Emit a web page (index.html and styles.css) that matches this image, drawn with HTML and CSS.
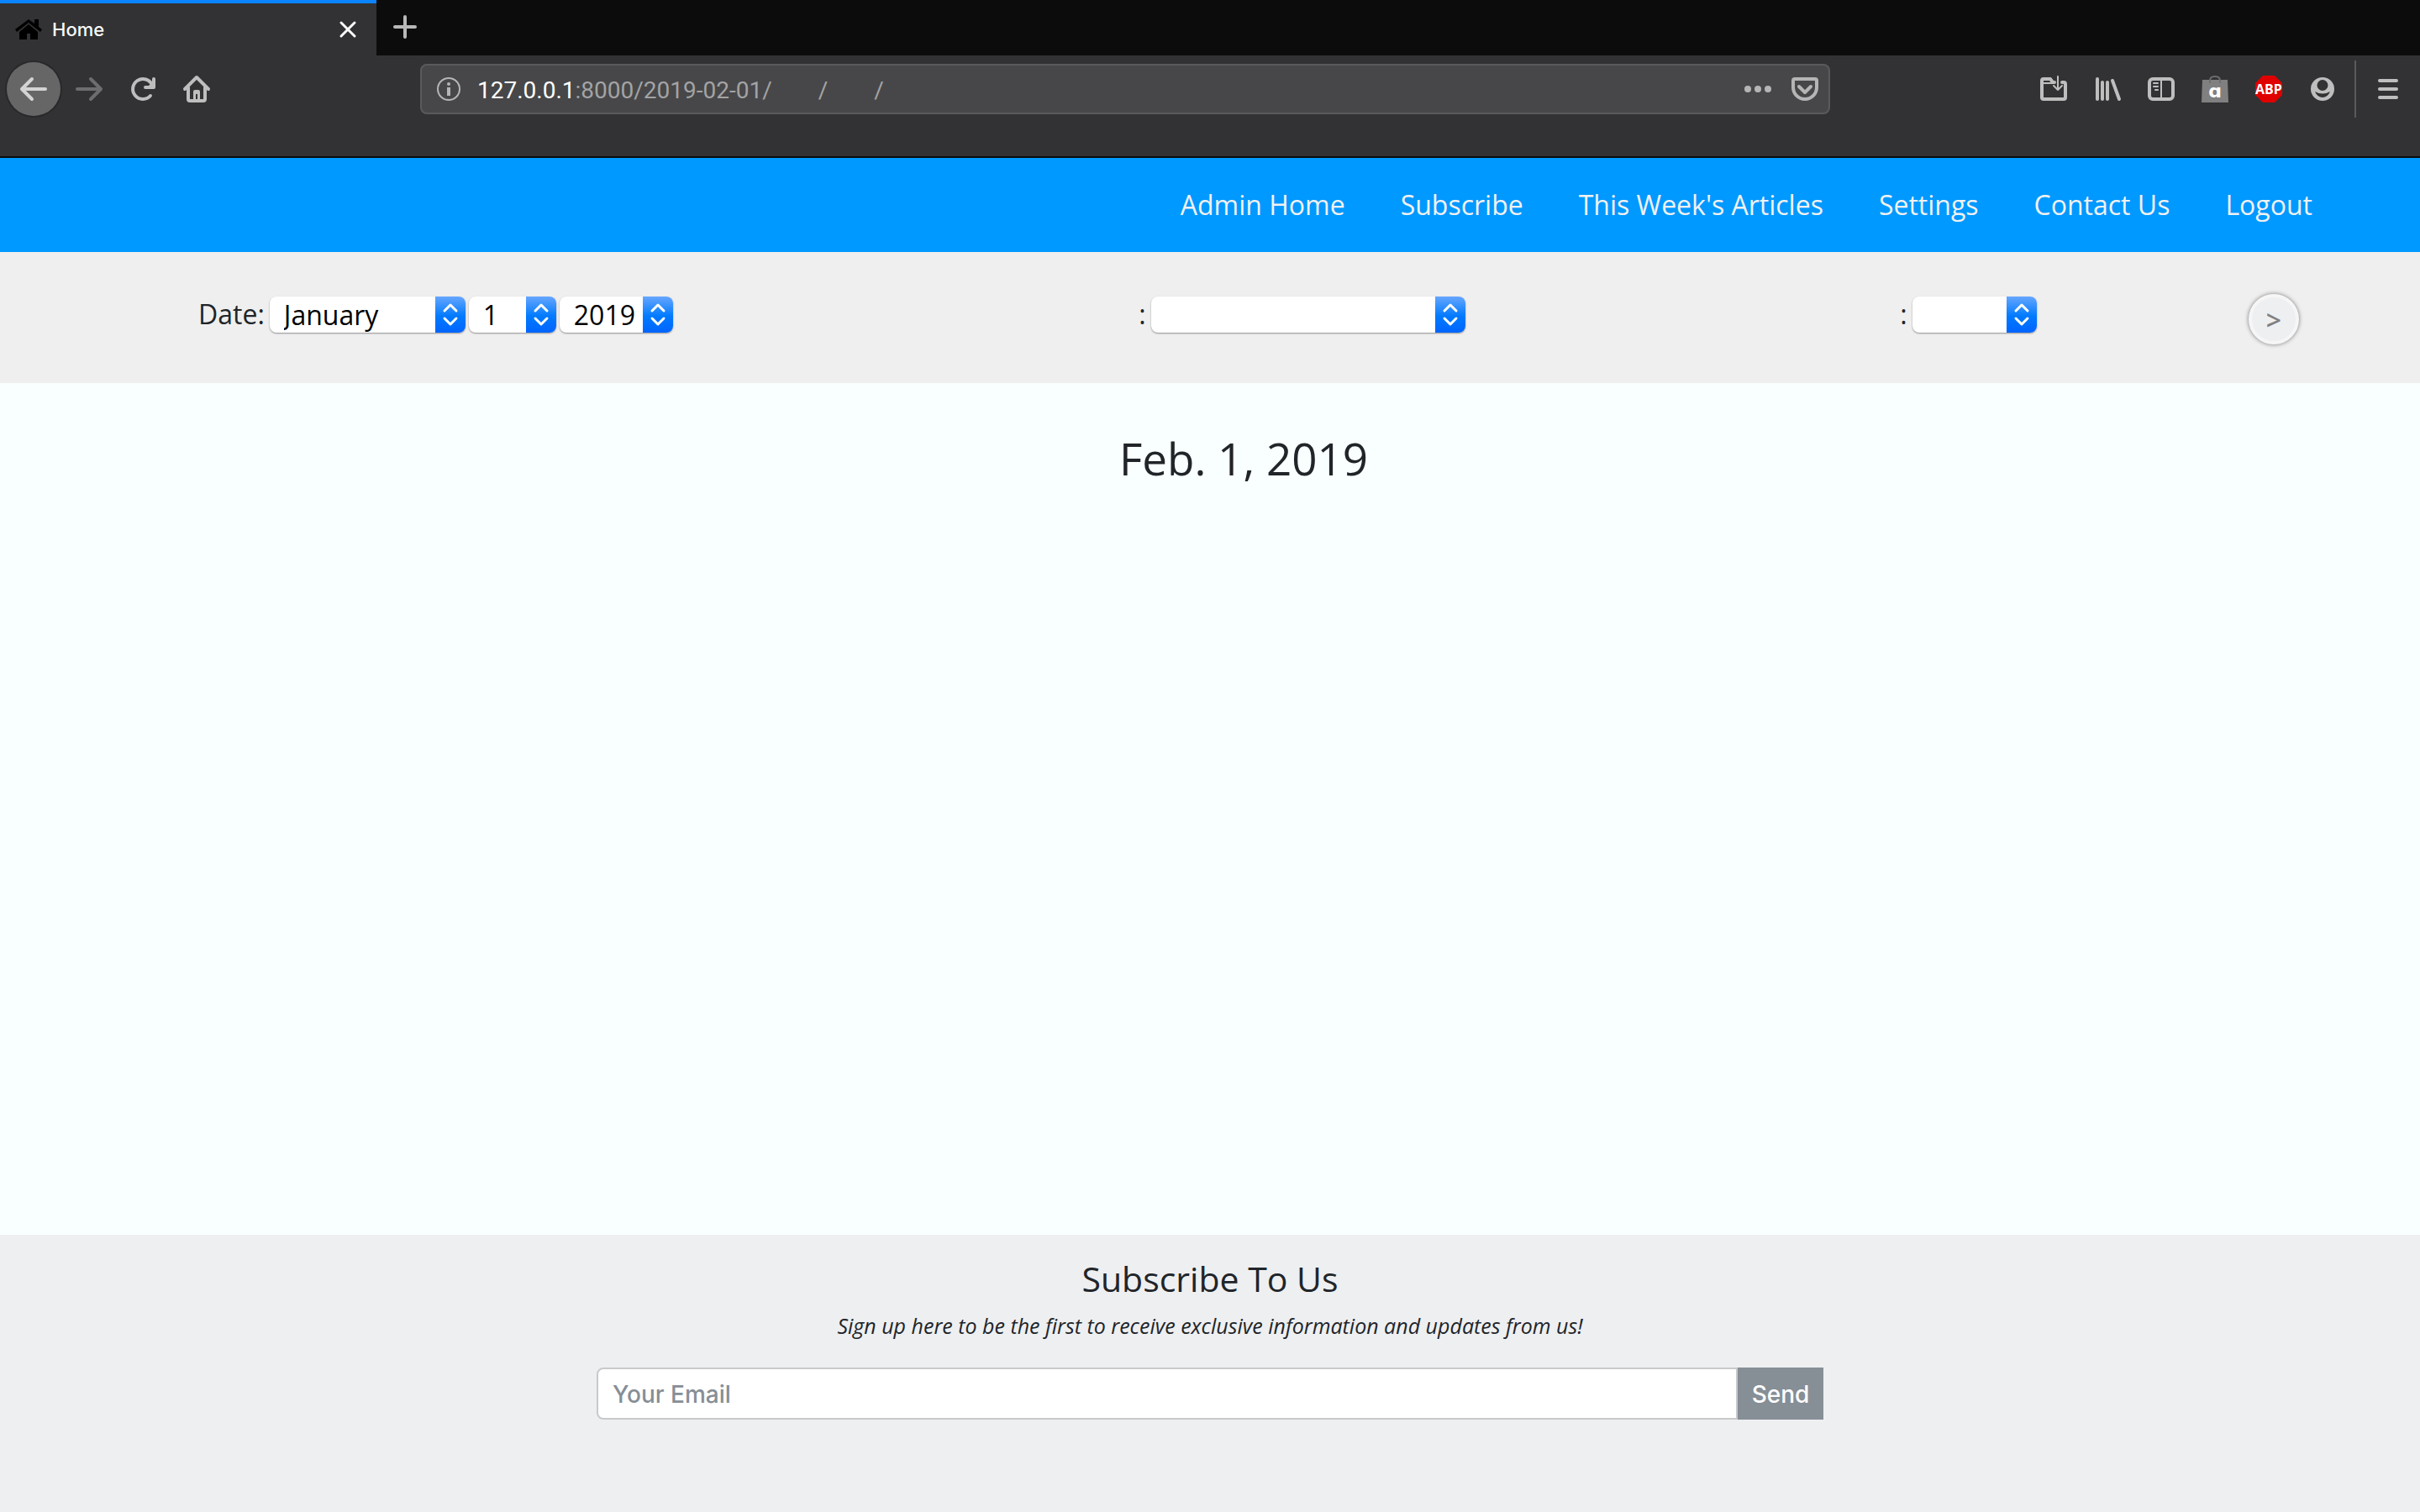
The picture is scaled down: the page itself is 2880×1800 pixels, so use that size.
FILE: index.html
```html
<!DOCTYPE html>
<html lang="en">
<head>
<meta charset="utf-8">
<title>Home</title>
<link rel="stylesheet" href="styles.css">
</head>
<body>
<div class="tabs">
  <div class="tab">
    <svg class="tab-icon" viewBox="0 0 32 24" width="32" height="24"><path d="M16 0 0 12l2 3L16 4l14 11 2-3-4-3V0h-5v5z"/><path d="M16 6 5 15v9h9v-7h4v7h9v-9z"/></svg>
    <span class="tab-title">Home</span>
    <button class="tab-close" aria-label="Close tab"><svg viewBox="0 0 20 20" width="20" height="20"><path d="m2 2 16 16M18 2 2 18"/></svg></button>
  </div>
  <button class="tab-new" aria-label="New tab"><svg viewBox="0 0 28 28" width="28" height="28"><path d="M14 2v24M2 14h24"/></svg></button>
</div>
<div class="toolbar">
  <div class="tools-left">
    <button class="back" aria-label="Back"><svg viewBox="0 0 32 32" width="32" height="32"><path d="M30 16H3M14 4 2 16l12 12"/></svg></button>
    <button class="tool dim" aria-label="Forward"><svg viewBox="0 0 32 32" width="32" height="32"><path d="M2 16h27M18 4l12 12-12 12"/></svg></button>
    <button class="tool" aria-label="Reload"><svg viewBox="0 0 32 32" width="32" height="32"><path d="M25 24a12 12 0 1 1 2-13"/><path d="M29 4v10H19"/><path d="m29 6-8 8h8z" class="fill"/></svg></button>
    <button class="tool" aria-label="Home page"><svg viewBox="0 0 32 32" width="32" height="32"><path d="M2 16 16 2l14 14M6 14v14q0 2 2 2h16q2 0 2-2V14"/><path d="M12 30V19q0-2 2-2h4q2 0 2 2v11h-3v-8h-2v8z" class="fill"/></svg></button>
  </div>
  <div class="address">
    <svg class="info" viewBox="0 0 28 28" width="28" height="28"><circle cx="14" cy="14" r="13"/><path class="fill" d="M12 12h4v10h-4z"/><circle class="fill" cx="14" cy="8" r="2"/></svg>
    <div class="url"><b>127.0.0.1</b>:8000/2019-02-01/<span class="seg">/</span><span class="seg">/</span></div>
    <button class="addr-btn" aria-label="Page actions"><svg viewBox="0 0 32 32" width="32" height="32"><g class="fill"><circle cx="4" cy="16" r="4"/><circle cx="16" cy="16" r="4"/><circle cx="28" cy="16" r="4"/></g></svg></button>
    <button class="addr-btn" aria-label="Save to Pocket"><svg viewBox="0 0 32 32" width="32" height="32"><path d="M4 4h24q2 0 2 2v8a14 14 0 0 1-28 0V6q0-2 2-2z"/><path d="m9 13 7 7 7-7"/></svg></button>
  </div>
  <div class="tools-right">
    <button class="tool" aria-label="Downloads folder"><svg viewBox="0 0 32 32" width="32" height="32"><path d="M17 8h-2l-3-4H4Q2 4 2 6v20q0 2 2 2h24q2 0 2-2V10q0-2-2-2h-2"/><path class="thin" d="M3 9h13M21 1v16m-5-5 5 5 5-5"/></svg></button>
    <button class="tool" aria-label="Library"><svg viewBox="0 0 32 32" width="32" height="32"><path d="M4 4v24M10 8v20M16 8v20M22 6l8 22"/></svg></button>
    <button class="tool" aria-label="Sidebar"><svg viewBox="0 0 32 32" width="32" height="32"><rect x="2" y="4" width="28" height="24" rx="4"/><path class="thin" d="M16 4v24M7 9h5M7 13h5M9 17h3"/></svg></button>
    <button class="tool" aria-label="Amazon Assistant"><svg viewBox="0 0 32 32" width="32" height="32"><path class="bag" d="M1 5h30l1 27H0z"/><path class="handle" d="M10 8V6q0-5 6-5t6 5v2"/><text x="16" y="26">ɑ</text></svg></button>
    <button class="tool" aria-label="Adblock Plus"><svg viewBox="0 0 32 32" width="32" height="32"><path class="stop" d="M9 0h14l9 9v14l-9 9H9l-9-9V9z"/><text class="abp" x="16" y="22">ABP</text></svg></button>
    <button class="tool" aria-label="Account"><svg viewBox="0 0 32 32" width="32" height="32"><path class="fill" fill-rule="evenodd" d="M16 2a14 14 0 1 0 0 28 14 14 0 0 0 0-28zm0 3a6 6 0 0 1 0 13 6 6 0 0 1 0-13zM7 19q9 5 18 0-3 7-9 7t-9-7z"/></svg></button>
    <button class="tool menu" aria-label="Menu"><svg viewBox="0 0 32 32" width="32" height="32"><path d="M6 6h20M6 16h20M6 26h20"/></svg></button>
  </div>
</div>
<nav class="nav">
  <a href="#">Admin Home</a>
  <a href="#">Subscribe</a>
  <a href="#">This Week's Articles</a>
  <a href="#">Settings</a>
  <a href="#">Contact Us</a>
  <a href="#">Logout</a>
</nav>
<form class="filters">
  <div class="group">
    <label for="month">Date:</label>
    <span class="pick month"><select id="month"><option>January</option></select><svg viewBox="0 0 36 43"><path d="m11 17 7-7 7 7M11 26l7 7 7-7"/></svg></span>
    <span class="pick day"><select aria-label="Day"><option>1</option></select><svg viewBox="0 0 36 43"><path d="m11 17 7-7 7 7M11 26l7 7 7-7"/></svg></span>
    <span class="pick year"><select aria-label="Year"><option>2019</option></select><svg viewBox="0 0 36 43"><path d="m11 17 7-7 7 7M11 26l7 7 7-7"/></svg></span>
  </div>
  <div class="group">
    <label for="topic">:</label>
    <span class="pick topic"><select id="topic"><option></option></select><svg viewBox="0 0 36 43"><path d="m11 17 7-7 7 7M11 26l7 7 7-7"/></svg></span>
  </div>
  <div class="group">
    <label for="kind">:</label>
    <span class="pick kind"><select id="kind"><option></option></select><svg viewBox="0 0 36 43"><path d="m11 17 7-7 7 7M11 26l7 7 7-7"/></svg></span>
  </div>
  <button class="go" type="button">&gt;</button>
</form>
<main class="main"><h1>Feb. 1, 2019</h1></main>
<footer class="footer">
  <h2>Subscribe To Us</h2>
  <p>Sign up here to be the first to receive exclusive information and updates from us!</p>
  <form class="signup">
    <input type="email" placeholder="Your Email" aria-label="Your Email">
    <button type="button">Send</button>
  </form>
</footer>
</body>
</html>
```
FILE: styles.css
```css
* { box-sizing: border-box; }
body {
  margin: 0;
  min-height: 100vh;
  display: flex;
  flex-direction: column;
  font-family: "Open Sans", sans-serif;
  font-size: 32px;
  line-height: 48px;
  color: #212529;
}
button { border: 0; padding: 0; background: none; font: inherit; color: inherit; }
svg { display: block; overflow: visible; }

/* Browser tabs */
.tabs { display: flex; height: 66px; background: #0c0c0d; }
.tab {
  width: 448px;
  display: flex;
  align-items: center;
  gap: 12px;
  padding: 0 24px 0 18px;
  border-top: 4px solid #0a84ff;
  background: #323234;
  color: #f9f9fa;
}
.tab-title { flex: 1; font: 500 22px/32px Inter, sans-serif; }
.tab-close svg { fill: none; stroke: #fff; stroke-width: 3; stroke-linecap: round; }
.tab-new { padding: 0 20px 2px; }
.tab-new svg { stroke: #b8b8b9; stroke-width: 4; stroke-linecap: round; }

/* Browser toolbar */
.toolbar {
  display: flex;
  align-items: flex-start;
  height: 122px;
  padding: 6px 0 0 8px;
  background: #323234;
  border-bottom: 2px solid #0c0c0d;
  color: #bebebf;
}
.toolbar svg {
  fill: none;
  stroke: currentColor;
  stroke-width: 4;
  stroke-linecap: round;
  stroke-linejoin: round;
}
.toolbar .fill { fill: currentColor; stroke: none; }
.toolbar .thin { stroke-width: 2; }
.tools-left, .tools-right { display: flex; align-items: center; height: 68px; }
.tools-left { width: 492px; }
.tool { width: 64px; height: 68px; display: grid; place-items: center; }
.dim { color: #6d6d6f; }
.back {
  width: 64px;
  height: 64px;
  display: grid;
  place-items: center;
  margin-right: 2px;
  border-radius: 50%;
  background: #666667;
  color: #d3d3d4;
  box-shadow: 0 0 0 2px #29292b;
}
.address {
  flex: 1;
  display: flex;
  align-items: center;
  height: 60px;
  margin: 4px 234px 0 0;
  padding: 0 12px 0 18px;
  border: 2px solid #5a5a5c;
  border-radius: 8px;
  background: #474749;
  color: #b5b5b6;
}
.toolbar .info { stroke-width: 2; }
.url { flex: 1; margin-left: 20px; padding-top: 4px; font: 28px/40px Roboto, sans-serif; color: #a3a3a4; }
.url b { font-weight: 400; color: #fff; }
.seg { margin-left: 55px; }
.addr-btn { margin-left: 24px; }
.menu { margin-left: 6px; border-left: 2px solid #5a5a5c; width: 78px; }
.toolbar text { font: 700 22px "DejaVu Sans", sans-serif; fill: #fff; stroke: none; text-anchor: middle; }
.toolbar .abp { font: 700 16px "Liberation Sans Narrow", "Open Sans", sans-serif; }
.toolbar .bag { fill: #808081; stroke: none; }
.toolbar .handle { stroke: #6d6d6f; stroke-width: 2; }
.toolbar .stop { fill: #e00000; stroke: none; }

/* Site navigation */
.nav {
  display: flex;
  flex-wrap: wrap;
  justify-content: flex-end;
  align-items: center;
  gap: 0 66px;
  min-height: 112px;
  padding: 0 128px;
  background: #0099ff;
}
.nav a { color: #f1f1f1; text-decoration: none; }

/* Date and topic filters */
.filters {
  display: grid;
  grid-template-columns: 1117fr 904fr 414fr auto;
  align-items: start;
  min-height: 156px;
  padding: 50px 5% 0 236px;
  background: #efefef;
}
.group { display: flex; align-items: center; gap: 4px; }
.group label { margin-right: 2px; }
.pick {
  display: grid;
  grid-template-columns: 1fr 36px;
  height: 43px;
  overflow: hidden;
  border-radius: 8px;
  background: #fff;
  box-shadow: 0 1px 2px #00000066;
}
.pick select {
  grid-area: 1 / 1 / 2 / 3;
  appearance: none;
  width: 100%;
  border: 0;
  padding: 0 40px 0 17px;
  background: none;
  font: inherit;
  line-height: 43px;
  color: #000;
}
.pick svg {
  grid-area: 1 / 2;
  width: 36px;
  height: 43px;
  pointer-events: none;
  background: linear-gradient(#66a6ff, #007aff 55%, #0064ff);
  fill: none;
  stroke: #fff;
  stroke-width: 3;
  stroke-linecap: round;
  stroke-linejoin: round;
}
.month { width: 233px; }
.day { width: 104px; }
.year { width: 135px; }
.topic { width: 374px; }
.kind { width: 148px; }
.go {
  width: 60px;
  height: 60px;
  padding-top: 2px;
  border: 4px solid #f6f6f6;
  border-radius: 50%;
  background: #eeeff1;
  box-shadow: 0 0 5px #00000080;
  font-size: 32px;
  font-weight: 600;
  color: #808080;
}

/* Content */
.main { flex: 1; padding: 48px 0 0 80px; background: #f9fffe; text-align: center; }
h1 { margin: 0; font-size: 53px; line-height: 84px; font-weight: 400; }

/* Footer */
.footer {
  min-height: 330px;
  padding: 22px 36px;
  background: #eeeff1;
  text-align: center;
}
h2 { margin: 0; font-size: 41px; line-height: 60px; font-weight: 500; }
p { margin: 8px 0 0; font-size: 25px; line-height: 36px; font-style: italic; }
.signup {
  display: flex;
  width: 52%;
  min-width: 400px;
  height: 62px;
  margin: 32px auto 0;
  font: 500 28px/40px Inter, sans-serif;
}
.signup input {
  flex: 1;
  min-width: 0;
  padding: 2px 17px 0;
  border: 2px solid #c8c9cb;
  border-radius: 8px 0 0 8px;
  background: #fff;
  font: inherit;
}
.signup input::placeholder { color: #868e96; }
.signup button { width: 102px; padding-top: 2px; background: #868e96; color: #fff; }
```
